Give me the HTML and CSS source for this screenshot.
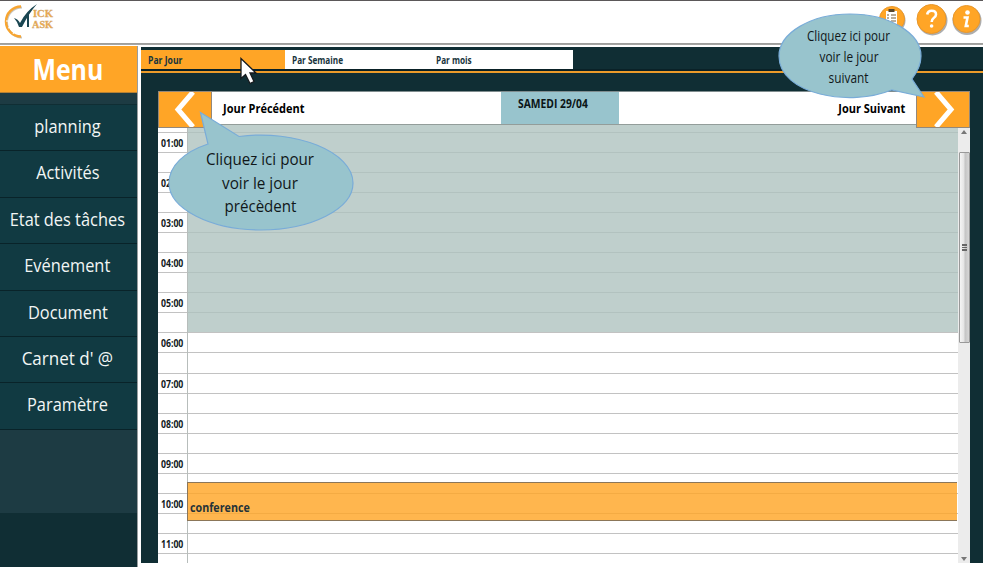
FILE: index.html
```html
<!DOCTYPE html>
<html lang="fr">
<head>
<meta charset="utf-8">
<title>Planning</title>
<link rel="stylesheet" href="styles.css">
</head>
<body>
<header class="top">
  <svg class="logo" width="60" height="42" viewBox="0 0 60 42">
    <path d="M22 7.500A15 15 0 0 0 22 37.500" fill="none" stroke="#c9c6bf" stroke-width="2"/>
    <path d="M21 6.500A15 15 0 0 0 21 36.500" fill="none" stroke="#f7a531" stroke-width="2.500"/>
    <path d="M8 28l3-1M13 34l1-2M6 21h2" stroke="#fff" stroke-width="1"/>
    <path d="M14 18q4 1 6 5Q26 11 37 4 29 13 22 27h-3Q17 21 14 18z" fill="#1a4652"/>
    <path d="M28 14v13" stroke="#1a4652" stroke-width="2"/>
    <g class="logo-text"><text x="33" y="17" textLength="20" lengthAdjust="spacingAndGlyphs">ICK</text><text x="32" y="27.500" textLength="21" lengthAdjust="spacingAndGlyphs">ASK</text></g>
  </svg>
  <svg class="tools" width="108" height="42" viewBox="875 0 108 42">
    <g fill="#777" opacity=".6"><circle cx="892.500" cy="20.500" r="13"/><circle cx="932.500" cy="20.500" r="15"/><circle cx="967" cy="20.500" r="14.500"/></g>
    <g fill="#ffa526" stroke="#e9972a"><circle cx="892" cy="19" r="12.500"/><circle cx="931.500" cy="19" r="14.500"/><circle cx="966.500" cy="19" r="13.500"/></g>
    <path d="M886 11h11v14h-11z" fill="#fff"/><path d="M888.500 9h6v3h-6z" fill="#55462f"/>
    <path d="M887 15h2m2 0h5m-9 3h2m2 0h5m-9 3h2m2 0h5" stroke="#715b3b"/>
    <path d="M927.200 14.500q.5-3.700 4.500-3.700 4.300 0 4.300 3.700 0 2-2.300 3.500-2 1.300-2 4" fill="none" stroke="#fff" stroke-width="2.600"/><circle cx="931.600" cy="26" r="1.800" fill="#fff"/>
    <circle cx="967.500" cy="12.500" r="2.300" fill="#fff"/><path d="M963.500 17.500h4l-1.700 8.500h3" fill="none" stroke="#fff" stroke-width="2.600"/>
  </svg>
</header>
<div class="layout">
  <aside class="side">
    <h1 class="menu-title"><span>Menu</span></h1>
    <nav class="menu">
      <a><span>planning</span></a>
      <a><span>Activités</span></a>
      <a><span>Etat des tâches</span></a>
      <a><span>Evénement</span></a>
      <a><span>Document</span></a>
      <a><span class="wide">Carnet d' @</span></a>
      <a><span>Paramètre</span></a>
    </nav>
    <div class="side-end"></div>
  </aside>
  <main class="main">
    <div class="tabs">
      <a class="tab active"><span>Par Jour</span></a>
      <a class="tab"><span>Par Semaine</span></a>
      <a class="tab"><span>Par mois</span></a>
    </div>
    <div class="rule"></div>
    <section class="board">
      <div class="day-bar">
        <button class="arrow"><svg width="52" height="35" viewBox="0 0 52 35"><path d="M34 0L19 17.500l15 17.500" /></svg></button>
        <span class="day-label prev"><span>Jour Précédent</span></span>
        <span class="date"><span>SAMEDI 29/04</span></span>
        <span class="day-label next"><span>Jour Suivant</span></span>
        <button class="arrow"><svg width="52" height="35" viewBox="0 0 52 35"><path d="M19 0L34 17.500l-15 17.500" /></svg></button>
      </div>
      <div class="agenda">
        <div class="hours">
          <div class="hour first off"><i></i></div>
          <div class="hour off"><span><b>01:00</b></span><i></i></div>
          <div class="hour off"><span><b>02:00</b></span><i></i></div>
          <div class="hour off"><span><b>03:00</b></span><i></i></div>
          <div class="hour off"><span><b>04:00</b></span><i></i></div>
          <div class="hour off"><span><b>05:00</b></span><i></i></div>
          <div class="hour"><span><b>06:00</b></span><i></i></div>
          <div class="hour"><span><b>07:00</b></span><i></i></div>
          <div class="hour"><span><b>08:00</b></span><i></i></div>
          <div class="hour"><span><b>09:00</b></span><i></i></div>
          <div class="hour"><span><b>10:00</b></span><i></i></div>
          <div class="hour"><span><b>11:00</b></span><i></i></div>
          <div class="event"><span>conference</span></div>
        </div>
        <div class="scroll">
          <svg class="up" width="12" height="25" viewBox="0 0 12 25"><path d="M3 7l3-4 3 4z" fill="#777"/></svg>
          <div class="thumb"><i></i><i></i><i></i></div>
          <svg class="down" width="12" height="12" viewBox="0 0 12 12"><path d="M3 6l3 4 3-4z" fill="#777"/></svg>
        </div>
      </div>
    </section>
  </main>
</div>
<svg class="overlay" width="983" height="567" viewBox="0 0 983 567">
  <g class="bubble">
    <path d="M200.500 112.500L239 136.500C296 129 353 152 353 183 353 209 311 230 261 230S169 209 169 183C169 166 184 152 208 144z"/>
    <path d="M924 97L891.500 90C851 107 779 95 779 56 779 33 811 14 850 14S921 33 921 56C921 65 918 71 912 79z"/>
  </g>
  <g class="tip">
    <text x="206" y="165" textLength="108" lengthAdjust="spacingAndGlyphs">Cliquez ici pour</text>
    <text x="222" y="188.500" textLength="76" lengthAdjust="spacingAndGlyphs">voir le jour</text>
    <text x="224.500" y="211.500" textLength="72" lengthAdjust="spacingAndGlyphs">précèdent</text>
  </g>
  <g class="tip small">
    <text x="807" y="40.500" textLength="83" lengthAdjust="spacingAndGlyphs">Cliquez ici pour</text>
    <text x="819.500" y="61.500" textLength="59" lengthAdjust="spacingAndGlyphs">voir le jour</text>
    <text x="828.500" y="82.500" textLength="40" lengthAdjust="spacingAndGlyphs">suivant</text>
  </g>
  <path d="M241 58.500v20l4.500-4 4.500 9 4-2-4-8.500h6z" fill="#fff" stroke="#15191c" stroke-width="1.300"/>
</svg>
</body>
</html>
```
FILE: styles.css
```css
* { box-sizing: border-box; }
body {
  margin: 0;
  width: 983px;
  height: 567px;
  overflow: hidden;
  position: relative;
  background: #fff;
  font-family: "Open Sans", "Noto Sans", sans-serif;
}
span > span, .menu span, .menu-title span, .tab span, .event span {
  display: inline-block;
  white-space: nowrap;
}
.top {
  height: 46px;
  display: flex;
  justify-content: space-between;
  border-top: 1px solid #5b5859;
  background: linear-gradient(#9b9b99, #a9a9a7) 0 42px / 100% 2px no-repeat #fff;
}
.top svg { margin-top: -1px; }
.logo-text { font: bold 10px "Liberation Serif", serif; fill: #f2ac4e; stroke: #c9a36b; stroke-width: .3px; }

.layout { display: flex; height: 521px; }
.side { width: 138px; flex: none; display: flex; flex-direction: column; background: #1d3b43; border-right: 1px solid #989d9f; }
.menu-title {
  margin: 0 0 11px;
  height: 47px;
  line-height: 46px;
  background: #ffa526;
  border-bottom: 1px solid #b58035;
  color: #fff;
  text-align: center;
  font-size: 28px;
}
.menu-title span { transform: translateX(-1px) scaleX(.89); }
.menu { display: flex; flex-direction: column; border-top: 1px solid #102e34; }
.menu a {
  height: 46.4px;
  line-height: 43px;
  background: #113a42;
  border-bottom: 1.5px solid #092329;
  color: #f2f6f5;
  font-size: 18px;
  text-align: center;
}
.menu span { transform: translateX(-1px) scaleX(.91); margin: 0 -10px; }
.menu .wide { transform: translateX(-1px) scaleX(.945); }
.side-end { margin-top: auto; height: 54px; background: #102e34; }

.main { margin: 1px 0 0 3px; width: 842px; height: 516px; background: #102e34; padding-top: 3px; }
.tabs { display: flex; height: 19px; }
.tab { width: 144px; background: #fff; color: #17343c; font-size: 10px; font-weight: 700; line-height: 20px; padding-left: 7px; }
.tab span { transform: scaleX(.82); transform-origin: left; }
.tab.active { background: #ffa526; }
.tab.active span { transform: scaleX(.86); }
.rule { height: 4px; border-top: 2px solid #0a2127; background: #eb9b2a; }

.board { width: 812px; height: 472px; margin: 18px 0 0 17px; display: flex; flex-direction: column; background: #fff; }
.day-bar { height: 33px; flex: none; display: flex; align-items: flex-start; position: relative; z-index: 1; background: #fff; border-top: 1px solid #7f8c8e; }
.arrow { width: 54px; height: 37px; flex: none; margin-top: -1px; padding: 0; border: 1px solid #93887b; background: #ffa526; }
.arrow svg { display: block; }
.arrow path { fill: none; stroke: #fff; stroke-width: 5; }
.day-label { color: #000; font-size: 13px; font-weight: 700; line-height: 32px; }
.prev { width: 289px; padding-left: 11px; }
.prev span { transform: scaleX(.845); transform-origin: left; }
.next { width: 297px; padding-right: 11px; text-align: right; }
.next span { transform: scaleX(.845); transform-origin: right; }
.date { width: 118px; height: 32px; background: #98c4cd; color: #0b1517; font-size: 12px; font-weight: 700; line-height: 24px; padding-left: 17px; }
.date span { transform: scaleX(.86); transform-origin: left; }

.agenda { flex: 1; display: flex; min-height: 0; }
.hours { width: 800px; position: relative; overflow: hidden; border-top: 1px solid #939d9a; }
.hour {
  height: 40.1px;
  display: grid;
  grid-template-columns: 29px 1fr;
  background: linear-gradient(#0000003d, #0000003d) 0 0 / 100% 1px no-repeat, linear-gradient(#0000003d, #0000003d) 0 20px / 100% 1px no-repeat;
}
.hour.first { height: 7px; background: none; }
.hour.first i { grid-column: 2; }
.hour span { height: 21px; text-align: center; font-size: 11px; line-height: 22px; color: #10191c; }
.hour b { display: inline-block; transform: scaleX(.79); margin: 0 -4px; }
.hour i { border-left: 1px solid #b7bdbb; }
.hour.off i { background: #aec3beca; }
.event { position: absolute; left: 29px; right: 1px; top: 357px; height: 39px; border: 1px solid #8b7659; border-right: 0; background: #ffa526d0; color: #263338; font-size: 13px; font-weight: 700; line-height: 49px; padding-left: 2px; }
.event span { transform: scaleX(.825); transform-origin: left; }

.scroll { width: 12px; background: #ececec; display: flex; flex-direction: column; margin-top: 3px; align-items: center; }
.up { flex: none; }
.thumb { width: 11px; height: 191px; flex: none; border: 1px solid #999; border-radius: 1px; background: linear-gradient(90deg, #f5f5f5, #e4e4e4 45%, #c4c4c4 55%, #d6d6d6); display: flex; flex-direction: column; align-items: center; justify-content: center; gap: 1px; }
.thumb i { width: 5px; height: 1.500px; background: #666; }
.down { margin-top: auto; }

.overlay { position: absolute; left: 0; top: 0; z-index: 2; pointer-events: none; }
.bubble { fill: #98c4cd; stroke: #79acd8; stroke-width: 1.2px; }
.tip { font: 17px "Open Sans", sans-serif; fill: #101719; }
.tip.small { font-size: 14.500px; }
```
